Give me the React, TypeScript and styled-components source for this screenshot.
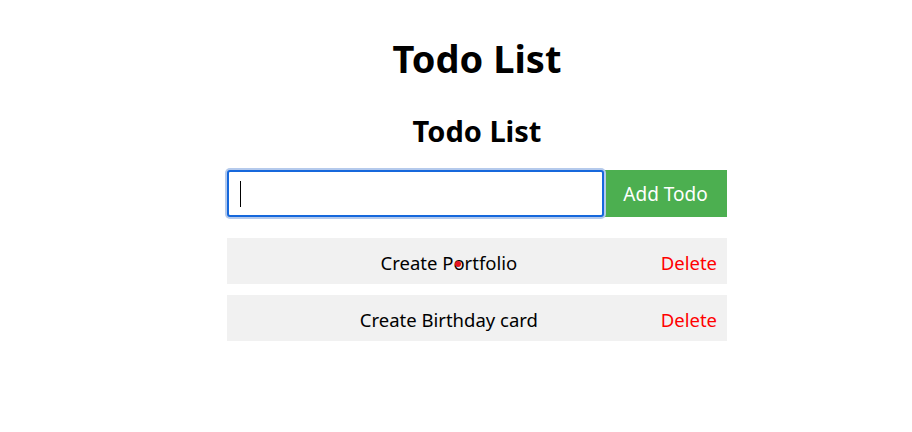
import React, { useState } from "react";
import styled, { createGlobalStyle } from "styled-components";

const Global = createGlobalStyle`
  html, body { margin: 0; padding: 0; background: #fff; }
  body { font-family: "Noto Sans", "Open Sans", sans-serif; color: #000; }
`;

const Page = styled.div`
  width: 500px;
  margin-left: 227px;
  padding-top: 36px;
  display: flex;
  flex-direction: column;
  align-items: stretch;
`;

const Title = styled.h1`
  margin: 0;
  font-size: 38px;
  line-height: 44px;
  font-weight: 700;
  text-align: center;
`;

const SubTitle = styled.h2`
  margin: 33px 0 21px;
  font-size: 29px;
  line-height: 36px;
  font-weight: 700;
  text-align: center;
`;

const Form = styled.div`
  display: flex;
  height: 47px;
`;

const InputWrap = styled.div`
  position: relative;
  flex: 1;
  display: flex;
`;

const Input = styled.input`
  flex: 1;
  min-width: 0;
  box-sizing: border-box;
  height: 47px;
  border: 2px solid #1668dc;
  border-radius: 3px;
  box-shadow: 0 0 0 2px #b5caec;
  outline: none;
  padding: 0 11px;
  font-family: inherit;
  font-size: 20px;
  caret-color: transparent;
`;

const Caret = styled.span`
  position: absolute;
  left: 13px;
  top: 11px;
  width: 1px;
  height: 26px;
  background: #000;
  pointer-events: none;
`;

const AddButton = styled.button`
  width: 123px;
  height: 47px;
  border: none;
  background: #4caf50;
  color: #fff;
  font-family: inherit;
  font-size: 19px;
  padding: 0;
  cursor: pointer;
`;

const List = styled.ul`
  list-style: none;
  margin: 21px 0 0;
  padding: 0;
  display: flex;
  flex-direction: column;
  gap: 11px;
`;

const Item = styled.li`
  position: relative;
  display: flex;
  align-items: center;
  height: 46px;
  box-sizing: border-box;
  padding: 3px 10px 0;
  background: #f1f1f1;
  font-size: 18.5px;
`;

const ItemText = styled.span`
  flex: 1;
  text-align: center;
`;

const DeleteButton = styled.button`
  border: none;
  background: none;
  padding: 0;
  color: #ff0000;
  font-family: inherit;
  font-size: 18.5px;
  cursor: pointer;
`;

const PointerDot = styled.span`
  position: absolute;
  left: 228px;
  top: 23px;
  width: 6px;
  height: 6px;
  border-radius: 50%;
  background: #e8141e;
`;

export default function App() {
  const [value, setValue] = useState("");
  const todos = ["Create Portfolio", "Create Birthday card"];
  return (
    <>
      <Global />
      <Page>
        <Title>Todo List</Title>
        <SubTitle>Todo List</SubTitle>
        <Form>
          <InputWrap>
            <Input autoFocus value={value} onChange={(e) => setValue(e.target.value)} />
            <Caret />
          </InputWrap>
          <AddButton>Add Todo</AddButton>
        </Form>
        <List>
          {todos.map((t, i) => (
            <Item key={t}>
              <ItemText>{t}</ItemText>
              <DeleteButton>Delete</DeleteButton>
              {i === 0 && <PointerDot />}
            </Item>
          ))}
        </List>
      </Page>
    </>
  );
}
